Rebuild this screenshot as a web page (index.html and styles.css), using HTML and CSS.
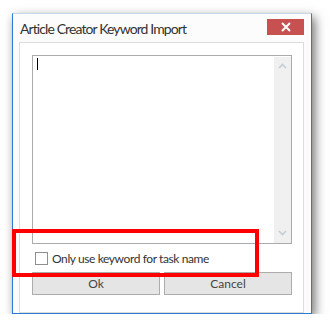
FILE: index.html
```
<!DOCTYPE html>
<html>
<head>
    <title>Article Creator Keyword Import</title>
    <link rel="stylesheet" href="styles.css">
</head>
<body>
    <div class="window">
        <div class="titlebar">
            <span class="title">Article Creator Keyword Import</span>
            <div class="close">
                <svg width="10" height="10" viewBox="0 0 10 10"><path d="M1 1 L9 9 M9 1 L1 9" stroke="#fff" stroke-width="2"/></svg>
            </div>
        </div>
        <div class="panel">
            <div class="editor">
                <div class="text-area"><span class="caret"></span></div>
                <div class="scrollbar">
                    <svg width="9" height="6" viewBox="0 0 9 6"><path d="M1 5 L4.5 1.5 L8 5" fill="none" stroke="#c4ccd4" stroke-width="1.6"/></svg>
                    <svg width="9" height="6" viewBox="0 0 9 6"><path d="M1 1 L4.5 4.5 L8 1" fill="none" stroke="#c4ccd4" stroke-width="1.6"/></svg>
                </div>
            </div>
            <label class="option">
                <span class="checkbox"></span>
                <span>Only use keyword for task name</span>
            </label>
            <div class="buttons">
                <button class="btn">Ok</button>
                <button class="btn">Cancel</button>
            </div>
        </div>
    </div>
    <div class="highlight"></div>
</body>
</html>
```

FILE: styles.css
```
body {
    margin: 0;
    padding: 0;
    background-color: #fff;
    font-family: Lato, "Noto Sans", sans-serif;
    color: #333;
}

.window {
    margin: 13px 0 0 12px;
    width: 298px;
    height: 299px;
    background-color: #fcfcfc;
    border: 1px solid #2b7bd3;
    border-top-color: #c9d6e6;
    box-shadow: 3px 4px 10px rgba(0, 0, 0, 0.55);
    display: flex;
    flex-direction: column;
}

.titlebar {
    height: 28px;
    display: flex;
    align-items: flex-start;
    justify-content: space-between;
}

.title {
    font-size: 14px;
    letter-spacing: -0.9px;
    margin: 6px 0 0 7px;
    color: #333;
}

.close {
    width: 37px;
    height: 16px;
    margin: 5px 7px 0 0;
    background-color: #c75050;
    display: flex;
    align-items: center;
    justify-content: center;
}

.panel {
    margin: 0 7px 0 6px;
    height: 259px;
    border: 1px solid #dcdcdc;
    background-color: #fff;
    padding: 12px 11px 0 12px;
}

.editor {
    height: 187px;
    border: 1px solid #ababab;
    display: flex;
}

.text-area {
    flex: 1;
    padding: 2px 0 0 4px;
}

.caret {
    display: block;
    width: 1px;
    height: 12px;
    background-color: #000;
}

.scrollbar {
    width: 17px;
    margin-top: 1px;
    background-color: #f0f0f0;
    display: flex;
    flex-direction: column;
    align-items: center;
    justify-content: space-between;
    padding: 6px 0 7px 0;
}

.option {
    display: flex;
    align-items: center;
    margin: 8px 0 0 3px;
    font-size: 12px;
    letter-spacing: -0.4px;
    height: 13px;
    color: #333;
}

.checkbox {
    width: 11px;
    height: 11px;
    border: 1px solid #8f8f8f;
    margin-right: 4px;
}

.buttons {
    display: flex;
    gap: 4px;
    margin-top: 7px;
}

.btn {
    width: 129px;
    height: 23px;
    background-color: #e5e5e5;
    border: 1px solid #acacac;
    font-family: Lato, "Noto Sans", sans-serif;
    font-size: 12px;
    color: #444;
    padding: 0;
}

.highlight {
    position: absolute;
    left: 12px;
    top: 229px;
    width: 239px;
    height: 40px;
    border: 4px solid #ff0000;
}
```
